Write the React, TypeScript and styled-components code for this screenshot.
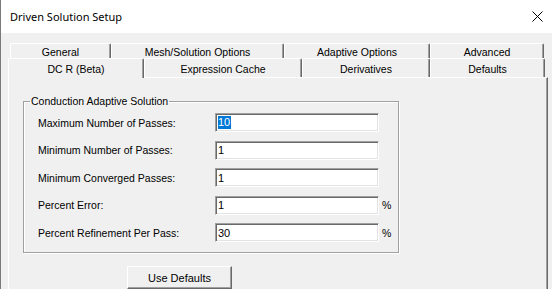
import React from "react";
import styled, { createGlobalStyle } from "styled-components";

const GlobalStyle = createGlobalStyle`
  html, body {
    margin: 0;
    padding: 0;
    width: 552px;
    height: 289px;
    overflow: hidden;
    background: #f0f0f0;
  }
  body {
    font-family: "Liberation Sans", Arial, sans-serif;
    font-size: 10.5px;
    color: #000;
  }
`;

const backTabs = [
  { label: "General", w: 101 },
  { label: "Mesh/Solution Options", w: 173 },
  { label: "Adaptive Options", w: 146 },
  { label: "Advanced", w: 114 },
];

const frontTabs = [
  { label: "DC R (Beta)", w: 136, active: true },
  { label: "Expression Cache", w: 158 },
  { label: "Derivatives", w: 128 },
  { label: "Defaults", w: 115 },
];

const rows = [
  { label: "Maximum Number of Passes:", value: "10", selected: true },
  { label: "Minimum Number of Passes:", value: "1" },
  { label: "Minimum Converged Passes:", value: "1" },
  { label: "Percent Error:", value: "1", unit: "%" },
  { label: "Percent Refinement Per Pass:", value: "30", unit: "%" },
];

const App: React.FC = () => {
  return (
    <>
      <GlobalStyle />
      <Window>
        <TitleBar>
          <Title>Driven Solution Setup</Title>
          <Close>
            <svg width="11" height="11" viewBox="0 0 11 11">
              <path d="M0.5 0.5 L10.5 10.5 M10.5 0.5 L0.5 10.5" stroke="#000" strokeWidth="1" />
            </svg>
          </Close>
        </TitleBar>

        <Body>
          <BackRow>
            {backTabs.map((t) => (
              <Tab key={t.label} $w={t.w}>
                {t.label}
              </Tab>
            ))}
          </BackRow>
          <FrontRow>
            {frontTabs.map((t) => (
              <Tab key={t.label} $w={t.w} $active={t.active}>
                {t.label}
              </Tab>
            ))}
          </FrontRow>

          <Panel>
            <GroupBox>
              <Legend>Conduction Adaptive Solution</Legend>
              <Grid>
                {rows.map((r) => (
                  <React.Fragment key={r.label}>
                    <Label>{r.label}</Label>
                    <Field>
                      {r.selected ? <Selected>{r.value}</Selected> : r.value}
                    </Field>
                    <Unit>{r.unit ?? ""}</Unit>
                  </React.Fragment>
                ))}
              </Grid>
            </GroupBox>
            <Button>Use Defaults</Button>
          </Panel>
        </Body>
      </Window>
    </>
  );
};

export default App;

const Window = styled.div`
  display: flex;
  flex-direction: column;
  width: 552px;
  height: 289px;
  box-sizing: border-box;
  border-left: 1px solid #7a7a7a;
  overflow: hidden;
`;

const TitleBar = styled.div`
  height: 33px;
  flex: none;
  background: #fff;
  display: flex;
  align-items: center;
  justify-content: space-between;
  padding-left: 9px;
`;

const Title = styled.span`
  font-family: "Noto Sans", "Open Sans", sans-serif;
  font-size: 11px;
  color: #000;
`;

const Close = styled.div`
  width: 30px;
  display: flex;
  justify-content: center;
`;

const Body = styled.div`
  flex: 1;
  display: flex;
  flex-direction: column;
  padding: 10px 0 0 7px;
`;

const BackRow = styled.div`
  display: flex;
  height: 15px;
  margin-left: 2px;
`;

const FrontRow = styled.div`
  display: flex;
  height: 19px;
  position: relative;
  z-index: 1;
`;

const Tab = styled.div<{ $w: number; $active?: boolean }>`
  width: ${({ $w }) => $w}px;
  height: ${({ $active }) => ($active ? "20px" : "100%")};
  margin-bottom: ${({ $active }) => ($active ? "-1px" : "0")};
  box-sizing: border-box;
  flex: none;
  display: flex;
  align-items: center;
  justify-content: center;
  padding-top: 1px;
  background: #f0f0f0;
  border-top: 1px solid #fff;
  border-left: 1px solid #fff;
  border-right: 1px solid #696969;
  box-shadow: inset -1px 0 #a0a0a0;
  border-radius: 2px 2px 0 0;
  white-space: nowrap;
`;

const Panel = styled.div`
  flex: 1;
  width: 540px;
  box-sizing: border-box;
  border-top: 1px solid #fff;
  border-left: 1px solid #fff;
  border-right: 1px solid #696969;
  box-shadow: inset -1px 0 #a0a0a0;
  padding: 16px 0 0 14px;
  display: flex;
  flex-direction: column;
  align-items: flex-start;
`;

const GroupBox = styled.fieldset`
  width: 376px;
  box-sizing: border-box;
  margin: 0;
  padding: 0;
  border: 1px solid #a0a0a0;
  box-shadow: 1px 1px 0 #fff, inset 1px 1px 0 #fff;
`;

const Legend = styled.legend`
  margin-left: 6px;
  padding: 0 1px;
  line-height: 14px;
`;

const Grid = styled.div`
  display: grid;
  grid-template-columns: 177px 164px auto;
  grid-auto-rows: 19px;
  row-gap: 8.5px;
  align-items: center;
  padding: 5px 0 10px 14px;
`;

const Label = styled.span`
  white-space: nowrap;
`;

const Field = styled.div`
  height: 19px;
  box-sizing: border-box;
  background: #fff;
  border: 1px solid;
  border-color: #a0a0a0 #fff #fff #a0a0a0;
  box-shadow: inset 1px 1px 0 #696969, inset -1px -1px 0 #e3e3e3;
  padding: 0 0 0 2px;
  font-size: 11px;
  display: flex;
  align-items: center;
`;

const Selected = styled.span`
  background: #0078d7;
  color: #fff;
  line-height: 13px;
  padding: 0 1px 0 0;
`;

const Unit = styled.span`
  margin-left: 3px;
`;

const Button = styled.div`
  margin: 13px 0 0 104px;
  width: 105px;
  height: 23px;
  box-sizing: border-box;
  display: flex;
  align-items: center;
  justify-content: center;
  font-size: 11px;
  background: #f0f0f0;
  border-top: 1px solid #fff;
  border-left: 1px solid #fff;
  border-right: 1px solid #696969;
  border-bottom: 1px solid #696969;
  box-shadow: inset -1px -1px 0 #a0a0a0;
`;
